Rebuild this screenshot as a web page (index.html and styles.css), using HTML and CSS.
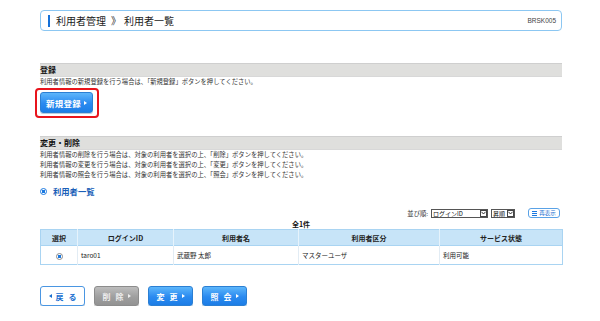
FILE: index.html
```html
<!DOCTYPE html>
<html lang="ja">
<head>
<meta charset="utf-8">
<title>利用者一覧</title>
<link rel="stylesheet" href="styles.css">
</head>
<body>
<div class="page">
  <div class="titlebar">
    <span class="mark"></span>
    <span class="title">利用者管理<span class="sep">》</span>利用者一覧</span>
    <span class="code">BRSK005</span>
  </div>

  <div class="section sec-reg">
    <div class="sec-head">登録</div>
    <p class="desc">利用者情報の新規登録を行う場合は、「新規登録」ボタンを押してください。</p>
    <div class="highlight">
      <button class="btn btn-blue btn-new"><span class="new-lbl">新規登録</span><span class="tri-r"></span></button>
    </div>
  </div>

  <div class="section sec-edit">
    <div class="sec-head">変更・削除</div>
    <p class="desc">利用者情報の削除を行う場合は、対象の利用者を選択の上、「削除」ボタンを押してください。<br>利用者情報の変更を行う場合は、対象の利用者を選択の上、「変更」ボタンを押してください。<br>利用者情報の照会を行う場合は、対象の利用者を選択の上、「照会」ボタンを押してください。</p>
  </div>

  <div class="list-title"><span class="dot-icon"></span><span>利用者一覧</span></div>

  <div class="sort-row">
    <span class="sort-label">並び順:</span>
    <span class="fake-select sel-key"><span class="sel-text">ログインID</span><span class="sel-arrow"><svg viewBox="0 0 6 4" width="5" height="4"><path d="M0.5 0.5 L3 3.2 L5.5 0.5" fill="none" stroke="#222" stroke-width="1.1"/></svg></span></span>
    <span class="fake-select sel-order"><span class="sel-text">昇順</span><span class="sel-arrow"><svg viewBox="0 0 6 4" width="5" height="4"><path d="M0.5 0.5 L3 3.2 L5.5 0.5" fill="none" stroke="#222" stroke-width="1.1"/></svg></span></span>
    <button class="btn-redisp"><svg viewBox="0 0 5 5" width="5" height="5"><path d="M0 0.5H5M0 2.5H5M0 4.5H5" stroke="#1a78e0" stroke-width="1"/></svg>再表示</button>
  </div>

  <div class="count">全1件</div>

  <table class="list">
    <colgroup>
      <col style="width:37px"><col style="width:96px"><col style="width:125px"><col style="width:141px"><col style="width:123px">
    </colgroup>
    <thead>
      <tr><th>選択</th><th>ログインID</th><th>利用者名</th><th>利用者区分</th><th>サービス状態</th></tr>
    </thead>
    <tbody>
      <tr><td class="c-radio"><span class="radio"></span></td><td>taro01</td><td>武蔵野 太郎</td><td>マスターユーザ</td><td>利用可能</td></tr>
    </tbody>
  </table>

  <div class="actions">
    <button class="btn btn-white"><span class="tri-l"></span><span class="lbl">戻る</span></button>
    <button class="btn btn-gray"><span class="lbl">削除</span><span class="tri-r"></span></button>
    <button class="btn btn-blue"><span class="lbl">変更</span><span class="tri-r"></span></button>
    <button class="btn btn-blue"><span class="lbl">照会</span><span class="tri-r"></span></button>
  </div>
</div>
</body>
</html>
```

FILE: styles.css
```css
html, body {
  margin: 0;
  padding: 0;
  background: #ffffff;
}
body {
  font-family: "Noto Sans CJK JP", "Noto Sans", sans-serif;
  color: #222222;
}
.page {
  width: 522px;
  margin-left: 40px;
  padding-top: 10px;
}
.titlebar {
  height: 21px;
  box-sizing: border-box;
  border: 1px solid #8cc7f2;
  border-radius: 4px;
  display: flex;
  align-items: center;
  padding: 0 5px 0 7px;
}
.mark {
  width: 2px;
  height: 12px;
  background: #1570d8;
  margin-right: 6px;
}
.title {
  font-size: 10px;
  line-height: 12px;
  color: #1a1a1a;
  white-space: nowrap;
}
.sep {
  margin-left: 5px;
  margin-right: 3px;
}
.code {
  margin-left: auto;
  font-size: 6.5px;
  color: #444444;
  font-family: "Liberation Sans", sans-serif;
}
.sec-reg {
  margin-top: 32px;
}
.sec-edit {
  margin-top: 18px;
}
.sec-head {
  height: 14px;
  box-sizing: border-box;
  background: #dfdfdd;
  border-top: 1px solid #cfcfcf;
  border-bottom: 1px solid #d8d8d8;
  font-size: 8px;
  font-weight: bold;
  line-height: 12px;
  color: #111111;
}
.desc {
  margin: 0;
  font-size: 6.3px;
  line-height: 10px;
  color: #333333;
}
.highlight {
  display: flex;
  width: fit-content;
  margin: 1px 0 0 -5px;
  border: 2px solid #e8141c;
  border-radius: 4px;
  padding: 2px 4px 3px 3px;
}
.btn {
  height: 20px;
  width: 45px;
  box-sizing: border-box;
  border-radius: 3px;
  font-family: "Noto Sans CJK JP", sans-serif;
  font-size: 8px;
  font-weight: bold;
  padding: 0;
  display: inline-flex;
  align-items: center;
  justify-content: center;
  gap: 4px;
}
.btn .lbl {
  letter-spacing: 5px;
  margin-right: -5px;
}
.btn-new {
  width: 53px;
  height: 21px;
  font-size: 8.5px;
  gap: 3px;
}
.new-lbl {
  letter-spacing: 0.3px;
}
.btn-blue {
  color: #ffffff;
  border: 1px solid #2b7fd3;
  background: linear-gradient(#5db6fb, #2a8af0 55%, #1c7de6);
  box-shadow: 0 1px 0 #b8cde0;
}
.btn-gray {
  color: #eeeeee;
  border: 1px solid #8c8c8c;
  background: linear-gradient(#bdbdbd, #9f9f9f 55%, #939393);
  box-shadow: 0 1px 0 #cccccc;
}
.btn-white {
  color: #1a6fd0;
  border: 1px solid #4a96e2;
  background: #ffffff;
  box-shadow: 0 1px 0 #c8d8e8;
}
.tri-r {
  width: 0;
  height: 0;
  border-top: 2.5px solid transparent;
  border-bottom: 2.5px solid transparent;
  border-left: 3.5px solid currentColor;
}
.tri-l {
  width: 0;
  height: 0;
  border-top: 2.5px solid transparent;
  border-bottom: 2.5px solid transparent;
  border-right: 3.5px solid currentColor;
}
.list-title {
  margin-top: 6px;
  height: 10px;
  display: flex;
  align-items: center;
  gap: 6px;
  font-size: 8.3px;
  font-weight: bold;
  color: #1b5fb8;
}
.dot-icon {
  width: 7px;
  height: 7px;
  box-sizing: border-box;
  border: 1px solid #1a78e0;
  border-radius: 50%;
  background: radial-gradient(circle, #1a78e0 0 1.6px, #ffffff 1.9px);
}
.sort-row {
  margin-top: 12px;
  height: 10px;
  display: flex;
  justify-content: flex-end;
  align-items: center;
  padding-right: 2px;
  font-size: 6.3px;
  color: #333333;
  white-space: nowrap;
}
.sort-label {
  margin-right: 3px;
}
.fake-select {
  height: 9px;
  box-sizing: border-box;
  border: 1px solid #555555;
  background: #ffffff;
  display: flex;
  align-items: center;
  justify-content: space-between;
  padding-left: 1px;
  color: #111111;
  font-size: 6px;
}
.sel-key {
  width: 57px;
}
.sel-order {
  width: 24px;
  margin-left: 3px;
}
.sel-text {
  line-height: 7px;
}
.sel-arrow {
  width: 7px;
  height: 7px;
  box-sizing: border-box;
  border: 1px solid #444444;
  display: flex;
  align-items: center;
  justify-content: center;
  flex: none;
}
.btn-redisp {
  margin-left: 13px;
  width: 32px;
  height: 10px;
  box-sizing: border-box;
  padding: 0 2px;
  border: 1px solid #5aa2e6;
  border-radius: 3px;
  background: #ffffff;
  color: #1a6fd0;
  font-family: "Noto Sans CJK JP", sans-serif;
  font-size: 5.5px;
  display: flex;
  align-items: center;
  justify-content: center;
  gap: 2px;
}
.count {
  margin-top: 1px;
  height: 10px;
  line-height: 10px;
  text-align: center;
  font-size: 7px;
  font-weight: bold;
  color: #111111;
}
.list {
  margin-top: 0;
  width: 522px;
  border-collapse: collapse;
  table-layout: fixed;
  border: 1px solid #a9d4f2;
  font-size: 6.5px;
}
.list th {
  height: 15px;
  padding: 0;
  background: #c7e4f8;
  border-left: 1px solid #e6f3fc;
  font-weight: bold;
  font-size: 7px;
  color: #222222;
  text-align: center;
}
.list th:first-child {
  border-left: none;
}
.list td {
  height: 18px;
  padding: 0 0 0 3px;
  border-left: 1px solid #e2ecf4;
  border-top: 1px solid #a9d4f2;
  color: #222222;
  text-align: left;
}
.list td:first-child {
  border-left: none;
}
.list td.c-radio {
  text-align: center;
  padding: 0;
}
.radio {
  display: inline-block;
  vertical-align: middle;
  width: 7px;
  height: 7px;
  box-sizing: border-box;
  border: 1px solid #8a8a8a;
  border-radius: 50%;
  background: radial-gradient(circle, #1a78e0 0 1.6px, #ffffff 1.9px);
}
.actions {
  margin-top: 21px;
  display: flex;
  gap: 9px;
}
```
